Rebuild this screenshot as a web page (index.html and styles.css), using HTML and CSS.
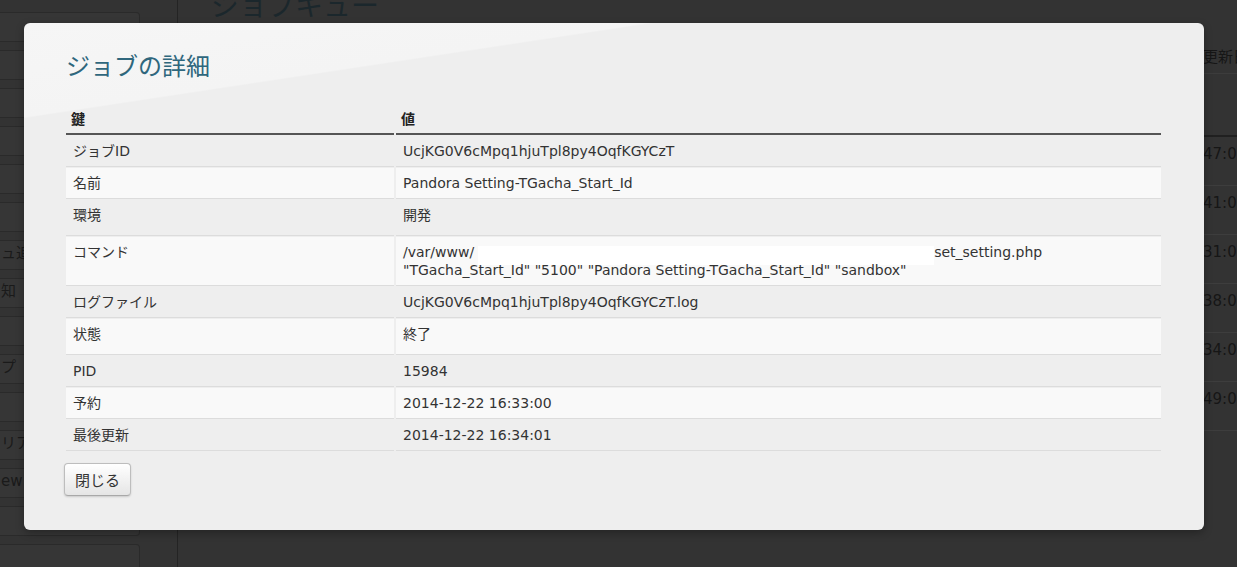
FILE: index.html
```html
<!DOCTYPE html>
<html lang="ja">
<head>
<meta charset="utf-8">
<title>ジョブキュー</title>
<link rel="stylesheet" href="styles.css">
</head>
<body>
<div class="page">
  <aside class="sidebar">
    <div class="side-item"></div>
    <div class="side-item"></div>
    <div class="side-item"></div>
    <div class="side-item"></div>
    <div class="side-item"></div>
    <div class="side-item"></div>
    <div class="side-item">ュ追加</div>
    <div class="side-item">知</div>
    <div class="side-item"></div>
    <div class="side-item">プ</div>
    <div class="side-item"></div>
    <div class="side-item">リア</div>
    <div class="side-item">ew</div>
    <div class="side-item"></div>
    <div class="side-item"></div>
  </aside>
  <main class="main">
    <h1 class="page-title">ジョブキュー</h1>
    <div class="queue">
      <div class="q-row q-head"><span></span><span class="q-cell q-head-cell">更新日時</span></div>
      <div class="q-row q-filter"><span></span><span></span></div>
      <div class="q-row q-data"><span></span><span class="q-cell">47:00</span></div>
      <div class="q-row q-data"><span></span><span class="q-cell">41:00</span></div>
      <div class="q-row q-data"><span></span><span class="q-cell">31:00</span></div>
      <div class="q-row q-data"><span></span><span class="q-cell">38:00</span></div>
      <div class="q-row q-data"><span></span><span class="q-cell">34:00</span></div>
      <div class="q-row q-data"><span></span><span class="q-cell">49:00</span></div>
    </div>
  </main>
</div>

<div class="modal">
  <h2 class="modal-title">ジョブの詳細</h2>
  <table class="detail">
    <thead>
      <tr><th class="key-col">鍵</th><th>値</th></tr>
    </thead>
    <tbody>
      <tr><td>ジョブID</td><td>UcjKG0V6cMpq1hjuTpl8py4OqfKGYCzT</td></tr>
      <tr><td>名前</td><td>Pandora Setting-TGacha_Start_Id</td></tr>
      <tr class="tall"><td>環境</td><td>開発</td></tr>
      <tr class="cmd"><td>コマンド</td><td>/var/www/<span class="redacted"></span>set_setting.php<br>"TGacha_Start_Id" "5100" "Pandora Setting-TGacha_Start_Id" "sandbox"</td></tr>
      <tr><td>ログファイル</td><td>UcjKG0V6cMpq1hjuTpl8py4OqfKGYCzT.log</td></tr>
      <tr class="tall"><td>状態</td><td>終了</td></tr>
      <tr><td>PID</td><td>15984</td></tr>
      <tr><td>予約</td><td>2014-12-22 16:33:00</td></tr>
      <tr><td>最後更新</td><td>2014-12-22 16:34:01</td></tr>
    </tbody>
  </table>
  <button class="btn" type="button">閉じる</button>
</div>
</body>
</html>
```

FILE: styles.css
```css
html, body {
  margin: 0;
  padding: 0;
}
body {
  background: #333333;
  width: 1237px;
  height: 567px;
  overflow: hidden;
  font-family: "DejaVu Sans", "Noto Sans CJK JP", sans-serif;
  position: relative;
}
.page {
  display: flex;
  height: 567px;
}
.sidebar {
  width: 178px;
  flex: none;
  border-right: 1px solid #242424;
  padding-top: 12px;
  box-sizing: border-box;
}
.side-item {
  width: 140px;
  height: 30px;
  box-sizing: border-box;
  margin-bottom: 8px;
  background: #363636;
  border: 1px solid #2a2a2a;
  border-left: none;
  border-radius: 0 4px 4px 0;
  color: #1a1a1a;
  font-size: 15px;
  line-height: 24px;
  padding-left: 1px;
  white-space: nowrap;
  overflow: hidden;
}
.main {
  flex: 1;
  overflow: hidden;
  padding-left: 33px;
}
.page-title {
  margin: -13px 0 0;
  font-size: 28px;
  font-weight: normal;
  line-height: 40px;
  color: #1b272c;
  white-space: nowrap;
}
.queue {
  margin-top: 13px;
  width: 1200px;
}
.q-row {
  display: grid;
  grid-template-columns: 988px 200px;
  align-items: start;
  color: #161616;
  font-size: 15px;
  line-height: 20px;
  white-space: nowrap;
}
.q-head {
  height: 33px;
  border-bottom: 1px solid #3c3c3c;
}
.q-head-cell {
  padding: 3px 0 0 7px;
}
.q-filter {
  height: 61px;
  border-bottom: 2px solid #202020;
}
.q-data {
  height: 48px;
  border-bottom: 1px solid #3d3d3d;
}
.q-cell {
  padding: 7px 0 0 4px;
}

/* modal */
.modal {
  position: absolute;
  left: 24px;
  top: 23px;
  width: 1180px;
  box-sizing: border-box;
  padding: 27px 41px 34px 40px;
  border-radius: 6px;
  background: linear-gradient(171.4deg, #f6f6f6 0, #f4f4f4 93px, #eeeeee 94.5px);
  box-shadow: 0 3px 8px rgba(0, 0, 0, 0.3);
}
.modal-title {
  margin: 0 0 19px 2px;
  font-size: 24px;
  line-height: 34px;
  font-weight: normal;
  color: #2f677d;
}
.detail {
  width: 1099px;
  table-layout: fixed;
  border-collapse: separate;
  border-spacing: 2px 1px;
  font-size: 14px;
  line-height: 17px;
  color: #333333;
}
.detail th {
  text-align: left;
  font-weight: bold;
  color: #222222;
  padding: 7px 5px 5px;
  border-bottom: 2px solid #555555;
}
.detail th.key-col {
  width: 328px;
  box-sizing: border-box;
}
.detail td {
  padding: 7px 7px 6px;
  height: 17px;
  vertical-align: top;
  border-bottom: 1px solid #dcdcdc;
}
.detail tbody tr:nth-child(even) td {
  background: #f9f9f9;
}
.detail tr.tall td {
  padding-bottom: 11px;
}
.detail tr.cmd td {
  padding-bottom: 6px;
}
.redacted {
  display: inline-block;
  width: 456px;
  height: 19px;
  margin: -3px 0 -3px 4px;
  vertical-align: -5px;
  background: #ffffff;
}
.btn {
  display: block;
  margin: 11px 0 0;
  height: 33px;
  padding: 0 10px;
  font-family: "DejaVu Sans", "Noto Sans CJK JP", sans-serif;
  font-size: 15px;
  color: #333333;
  background: linear-gradient(#ffffff, #e5e5e5);
  border: 1px solid #bdbdbd;
  border-bottom-color: #a8a8a8;
  border-radius: 4px;
  box-shadow: 0 1px 2px rgba(0, 0, 0, 0.15);
}
```
